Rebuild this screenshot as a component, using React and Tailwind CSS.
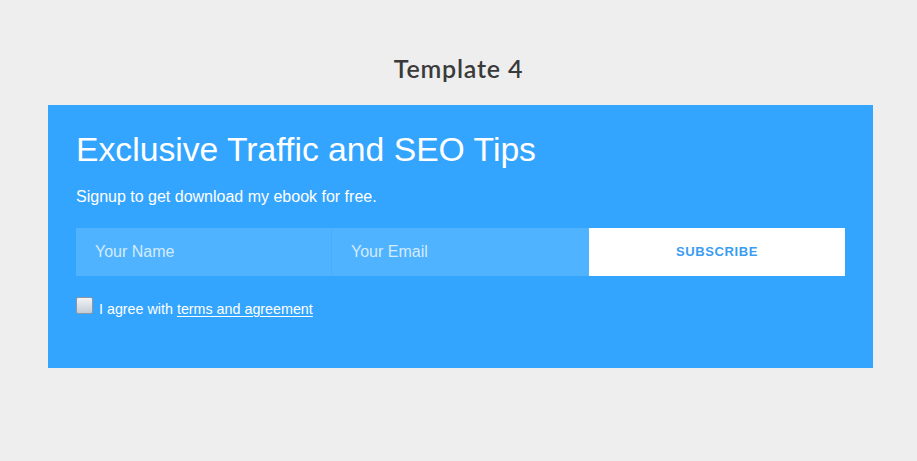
import React, { useState } from "react";

const App = () => {
  const [agree, setAgree] = useState(false);

  return (
    <div className="min-h-[461px] w-full bg-[#eeeeee] pt-[52px] font-['Liberation_Sans',Arial,sans-serif]">
      <h2 className="text-center text-[25px] leading-[32px] font-semibold text-[#3a3a3a] font-['Lato','Open_Sans',sans-serif] tracking-[0.8px]">
        Template 4
      </h2>

      {/* Signup box */}
      <div className="ml-[48px] mt-[21px] h-[263px] w-[825px] bg-[#33a5ff] px-[28px] pt-[25px]">
        <h1 className="text-[33.7px] leading-[38px] text-white">
          Exclusive Traffic and SEO Tips
        </h1>
        <p className="mt-[19px] text-[16px] leading-[19px] text-white">
          Signup to get download my ebook for free.
        </p>

        <form className="mt-[22px] flex h-[48px]" onSubmit={(e) => e.preventDefault()}>
          <input
            type="text"
            placeholder="Your Name"
            className="h-full w-[256px] border-r border-[#45adfc] bg-[#50b3ff] px-[19px] text-[16px] text-white outline-none placeholder:text-[#d3ebff]"
          />
          <input
            type="email"
            placeholder="Your Email"
            className="h-full w-[257px] bg-[#50b3ff] px-[19px] text-[16px] text-white outline-none placeholder:text-[#d3ebff]"
          />
          <button
            type="submit"
            className="h-full flex-1 bg-white text-[13px] font-bold uppercase tracking-[0.6px] text-[#3a9df2]"
          >
            Subscribe
          </button>
        </form>

        <label className="mt-[18px] flex items-center gap-[6px] text-[14.3px] leading-[18px] text-white">
          <span
            onClick={() => setAgree(!agree)}
            className="mb-[2px] flex h-[17px] w-[17px] items-center justify-center rounded-[2px] border border-[#8d98a4] bg-gradient-to-b from-[#f2f4f6] to-[#c4ccd4] text-[12px] leading-none text-[#333]"
          >
            {agree ? "✓" : ""}
          </span>
          <span className="mt-[6px]">
            I agree with{" "}
            <a href="#" className="underline underline-offset-2">
              terms and agreement
            </a>
          </span>
        </label>
      </div>
    </div>
  );
};

export default App;
